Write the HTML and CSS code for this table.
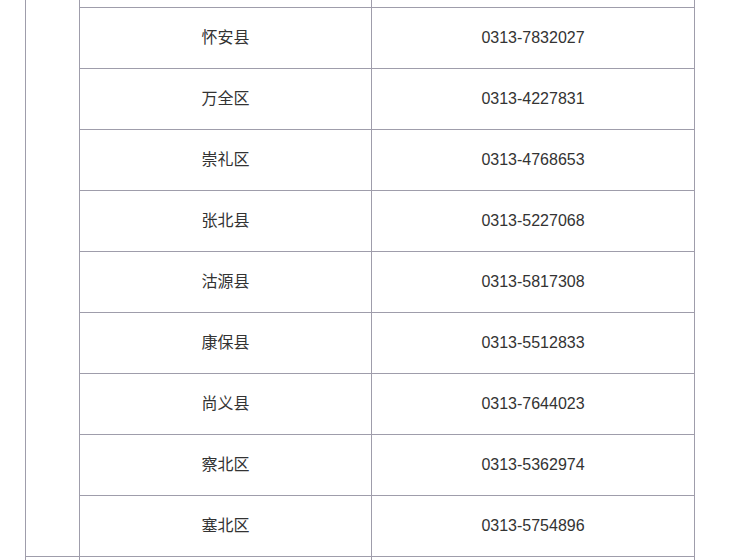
FILE: index.html
```html
<!DOCTYPE html>
<html lang="zh">
<head>
<meta charset="utf-8">
<title>电话</title>
<link rel="stylesheet" href="styles.css">
</head>
<body>
<div class="page">
<table class="phones">
<colgroup><col class="c1"><col class="c2"><col class="c3"></colgroup>
<tbody>
<tr><td class="city" rowspan="10"></td><td>&nbsp;</td><td>&nbsp;</td></tr>
<tr><td>怀安县</td><td>0313-7832027</td></tr>
<tr><td>万全区</td><td>0313-4227831</td></tr>
<tr><td>崇礼区</td><td>0313-4768653</td></tr>
<tr><td>张北县</td><td>0313-5227068</td></tr>
<tr><td>沽源县</td><td>0313-5817308</td></tr>
<tr><td>康保县</td><td>0313-5512833</td></tr>
<tr><td>尚义县</td><td>0313-7644023</td></tr>
<tr><td>察北区</td><td>0313-5362974</td></tr>
<tr><td>塞北区</td><td>0313-5754896</td></tr>
<tr><td class="city" rowspan="2"></td><td>&nbsp;</td><td>&nbsp;</td></tr>
<tr><td>&nbsp;</td><td>&nbsp;</td></tr>
</tbody>
</table>
</div>
</body>
</html>
```
FILE: styles.css
```css
html, body {
  margin: 0;
  padding: 0;
  background: #fff;
}
.page {
  padding-left: 25px;
  overflow: hidden;
  height: 560px;
}
.phones {
  margin-top: -54px;
  border-collapse: collapse;
  table-layout: fixed;
  width: 669px;
  font-family: "Liberation Sans", Arial, "Noto Sans CJK SC", sans-serif;
  font-size: 16px;
  line-height: 18px;
  color: #333;
}
.c1 { width: 54px; }
.c2 { width: 292px; }
.c3 { width: 323px; }
.phones td {
  border: 1px solid #9f9dab;
  height: 60px;
  padding: 0;
  text-align: center;
  vertical-align: middle;
}
```
